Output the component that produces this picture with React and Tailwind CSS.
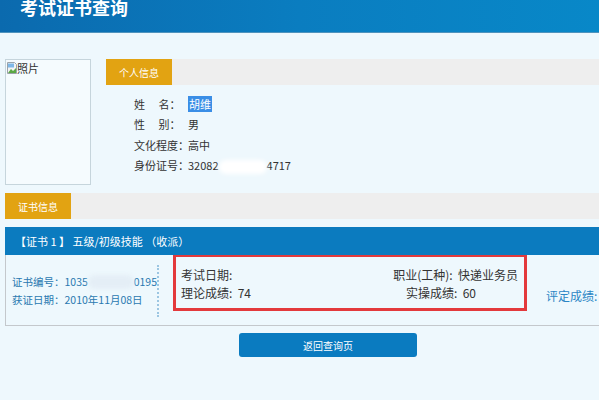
import React from "react";

const cjk = "font-['Microsoft_YaHei','Noto_Sans_CJK_SC','Noto_Sans',sans-serif]";

// Soft smudge that hides part of a number
function Smudge({ w, tone = "bg-white" }) {
  return (
    <span className={`inline-block h-[14px] align-middle rounded-full blur-[2px] ${tone}`} style={{ width: w }} />
  );
}

function BrokenImage() {
  return (
    <svg width="10" height="12" viewBox="0 0 10 12" className="shrink-0">
      <path d="M0.5 0.5h7l2 2v9h-9z" fill="#f4f4f4" stroke="#9aa3aa" />
      <path d="M1 11l3-4 2 2 3-3v5z" fill="#5aa845" />
      <rect x="1" y="1.5" width="6" height="4" fill="#7fb8e8" />
    </svg>
  );
}

function InfoRow({ label, children }) {
  return (
    <div className="flex h-[20.4px] items-center">
      <span className="w-[54px] whitespace-pre">{label}</span>
      <span>{children}</span>
    </div>
  );
}

function TabBar({ title }) {
  return (
    <div className="flex h-[26px] bg-[#eeeeee]">
      <div className="flex w-[66px] items-center justify-center bg-[#e2a312] text-[10px] text-white">{title}</div>
    </div>
  );
}

export default function App() {
  return (
    <div className={`h-[400px] w-[599px] overflow-hidden bg-[#eef8fd] ${cjk}`}>
      <header className="h-[33px] overflow-hidden border-b border-[#4f93bd] bg-gradient-to-r from-[#0b6aae] via-[#0a7dc0] to-[#0888c8]">
        <h1 className="-mt-[3px] pl-[20px] text-[18px] font-bold leading-[20px] text-white">考试证书查询</h1>
      </header>

      <section className="mt-[26px] flex pl-[5px]">
        <div className="flex h-[126px] w-[86px] items-start border border-[#c6d5dc] bg-[#f5fbfe] pl-[1px] pt-[2px] text-[11px] leading-[12px] text-[#333]">
          <BrokenImage />
          <span>照片</span>
        </div>
        <div className="ml-[15px] flex-1">
          <TabBar title="个人信息" />
          <div className="mt-[9px] pl-[28px] text-[11px] text-[#333]">
            <InfoRow label={"姓\u3000 名："}>
              <span className="bg-[#3a8ee6] px-[1px] text-white">胡维</span>
            </InfoRow>
            <InfoRow label={"性\u3000 别："}>男</InfoRow>
            <InfoRow label="文化程度：">高中</InfoRow>
            <InfoRow label="身份证号：">
              <span>32082</span>
              <Smudge w={48} />
              <span>4717</span>
            </InfoRow>
          </div>
        </div>
      </section>

      <section className="mt-[8px] pl-[5px]">
        <TabBar title="证书信息" />
        <div className="mt-[8px] flex h-[28px] items-center bg-[#0b7bbf] pl-[10px] text-[11px] text-white">
          【证书 1 】 五级/初级技能 （收派）
        </div>
        <div className="flex h-[71px] items-start overflow-hidden border-b border-l border-[#c4c8cc] pl-[6px]">
          <div className="w-[145px] shrink-0 pt-[18px] text-[10.5px] text-[#2a78b0]">
            <div className="flex h-[18px] items-center whitespace-nowrap">
              <span>证书编号：</span>
              <span>1035</span>
              <Smudge w={46} tone="bg-[#e4eef6]" />
              <span>0195</span>
            </div>
            <div className="flex h-[18px] items-center whitespace-nowrap">获证日期：2010年11月08日</div>
          </div>
          <div className="mt-[10px] h-[52px] shrink-0 border-l-2 border-dotted border-[#9cc6e2]" />
          <div className="-mt-[1px] ml-[14px] h-[57px] w-[354px] shrink-0 border-[3px] border-[#e3393c] pl-[5px] pr-[6px] pt-[9px] text-[12px] text-[#333]">
            <div className="flex h-[18px] items-center justify-between">
              <span>考试日期:</span>
              <span>职业(工种):&nbsp; 快递业务员</span>
            </div>
            <div className="flex h-[18px] items-center justify-between">
              <span>理论成绩:&nbsp; 74</span>
              <span className="pr-[42px]">实操成绩:&nbsp; 60</span>
            </div>
          </div>
          <div className="ml-[19px] mt-[32px] h-[18px] shrink-0 whitespace-nowrap text-[12px] leading-[18px] text-[#2b86c5]">评定成绩:</div>
        </div>
        <button className="ml-[234px] mt-[7px] flex h-[24px] w-[178px] items-center justify-center rounded-[3px] bg-[#0a7bc0] text-[10px] text-white">
          返回查询页
        </button>
      </section>
    </div>
  );
}
